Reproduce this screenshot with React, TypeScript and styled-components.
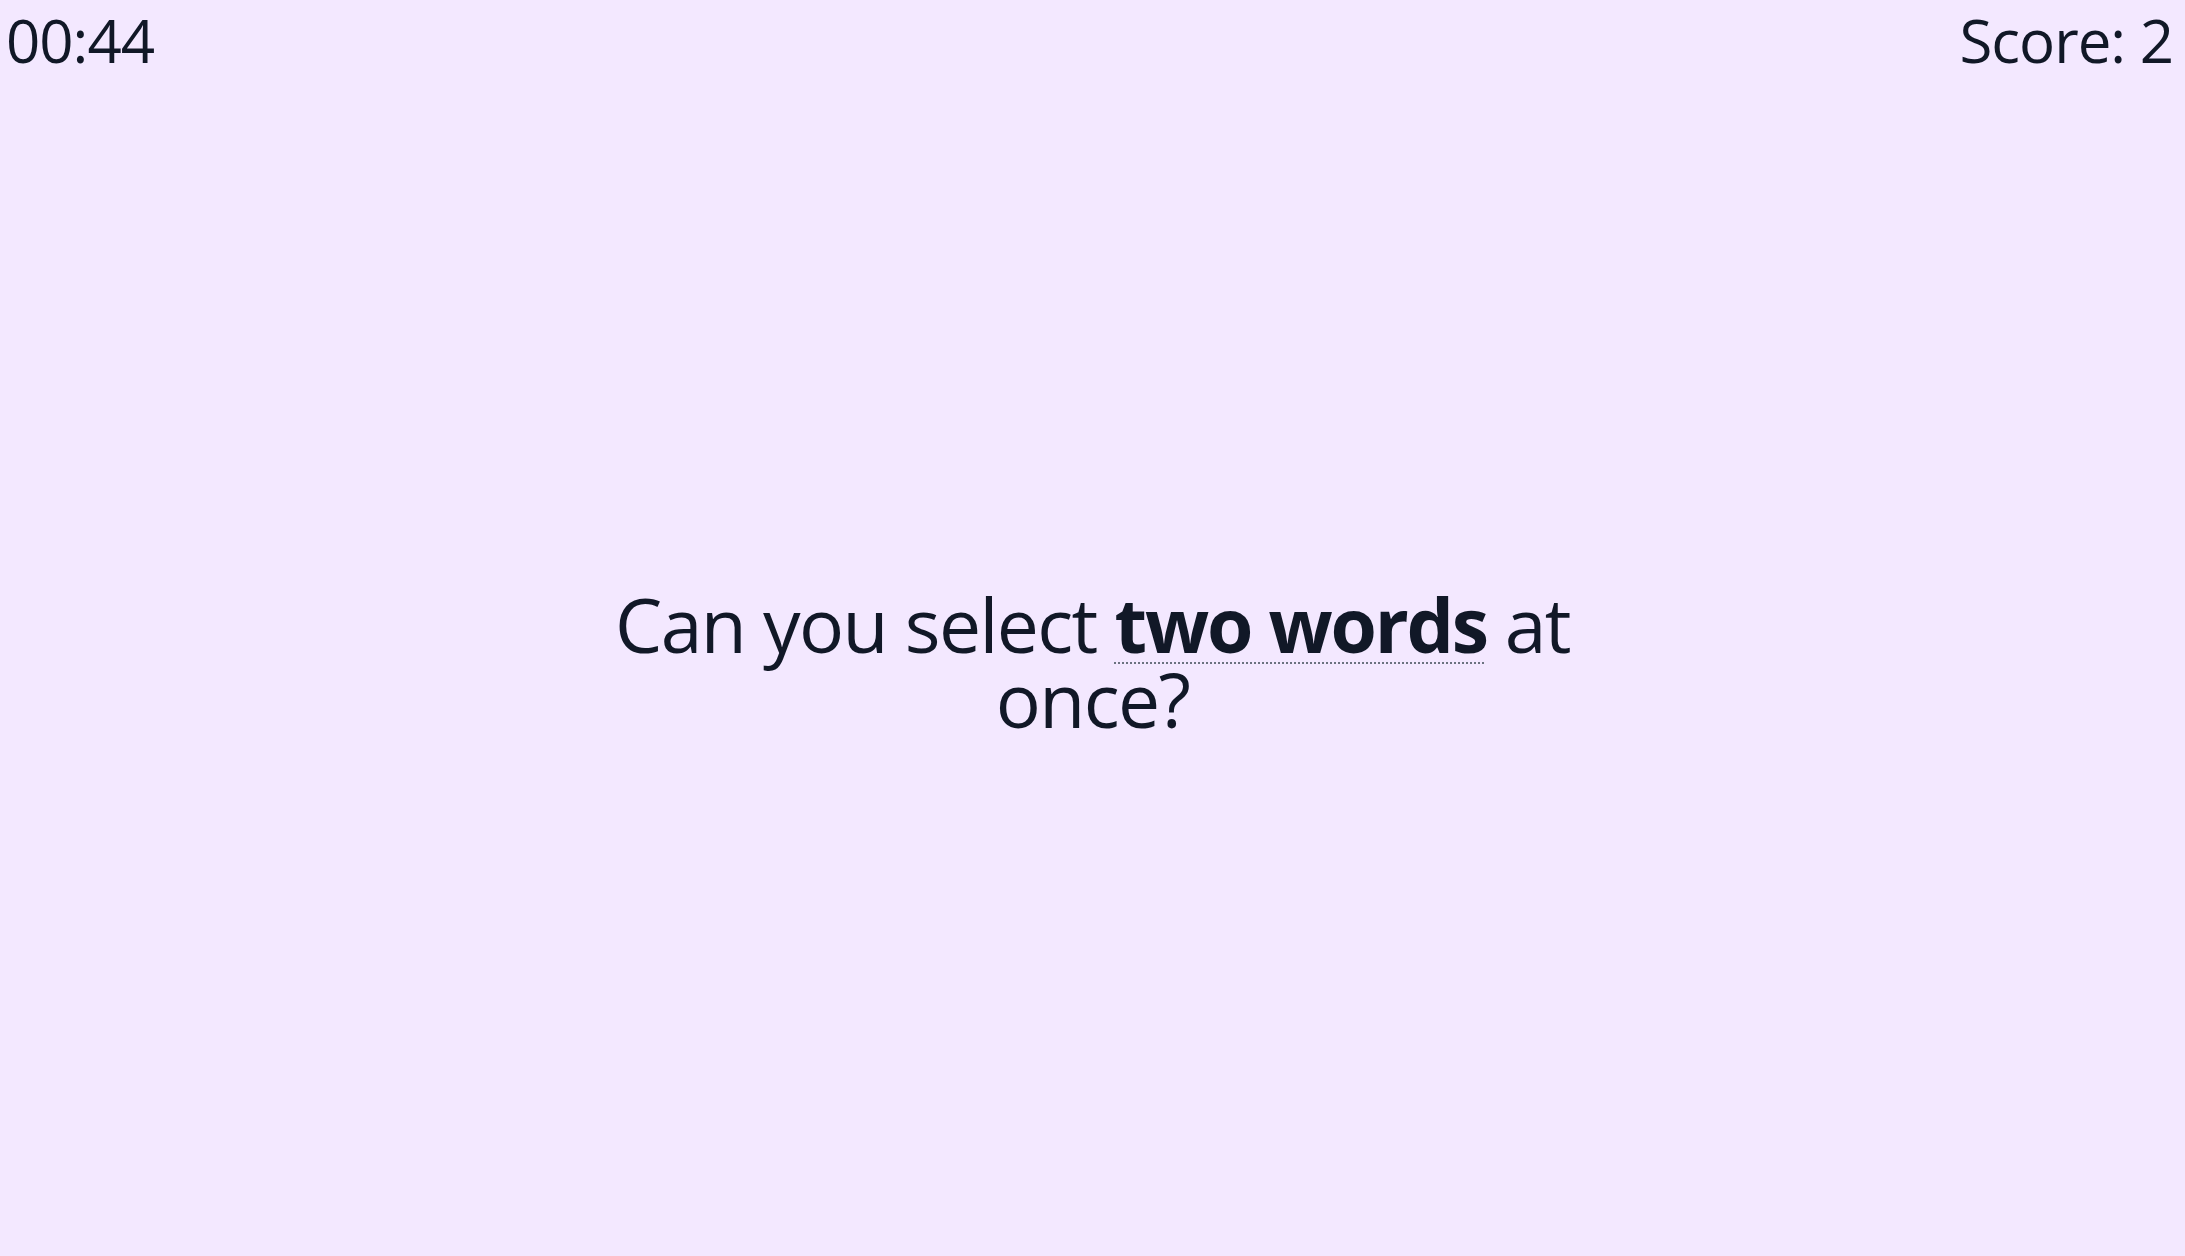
import React from "react";
import styled, { createGlobalStyle } from "styled-components";

const GlobalStyle = createGlobalStyle`
  html, body {
    margin: 0;
    padding: 0;
    background: #f3e8ff;
  }
  body {
    font-family: "Open Sans", "Noto Sans", sans-serif;
    color: #111827;
  }
`;

const Page = styled.div`
  display: flex;
  flex-direction: column;
  min-height: 100vh;
  background: #f3e8ff;
`;

const Header = styled.header`
  display: flex;
  justify-content: space-between;
  align-items: flex-start;
  padding: 10px 12px 0 6px;
  height: 68px;
  box-sizing: border-box;
`;

const Stat = styled.div`
  font-size: 60px;
  line-height: 60px;
  font-weight: 400;
  letter-spacing: -1px;
`;

const Main = styled.main`
  flex: 1;
  display: flex;
  align-items: center;
  justify-content: center;
`;

const Question = styled.p`
  margin: 0;
  max-width: 1024px;
  text-align: center;
  font-size: 75px;
  line-height: 75px;
  font-weight: 400;
  letter-spacing: -1.6px;
`;

const Target = styled.span`
  font-weight: 700;
  letter-spacing: -2.2px;
  text-decoration-line: underline;
  text-decoration-style: dotted;
  text-decoration-color: #6b7280;
  text-decoration-thickness: 2px;
  text-underline-offset: 9px;
`;

export default function App() {
  return (
    <>
      <GlobalStyle />
      <Page>
        <Header>
          <Stat>00:44</Stat>
          <Stat>Score: 2</Stat>
        </Header>
        <Main>
          <Question>
            Can you select <Target>two words</Target> at once?
          </Question>
        </Main>
      </Page>
    </>
  );
}
